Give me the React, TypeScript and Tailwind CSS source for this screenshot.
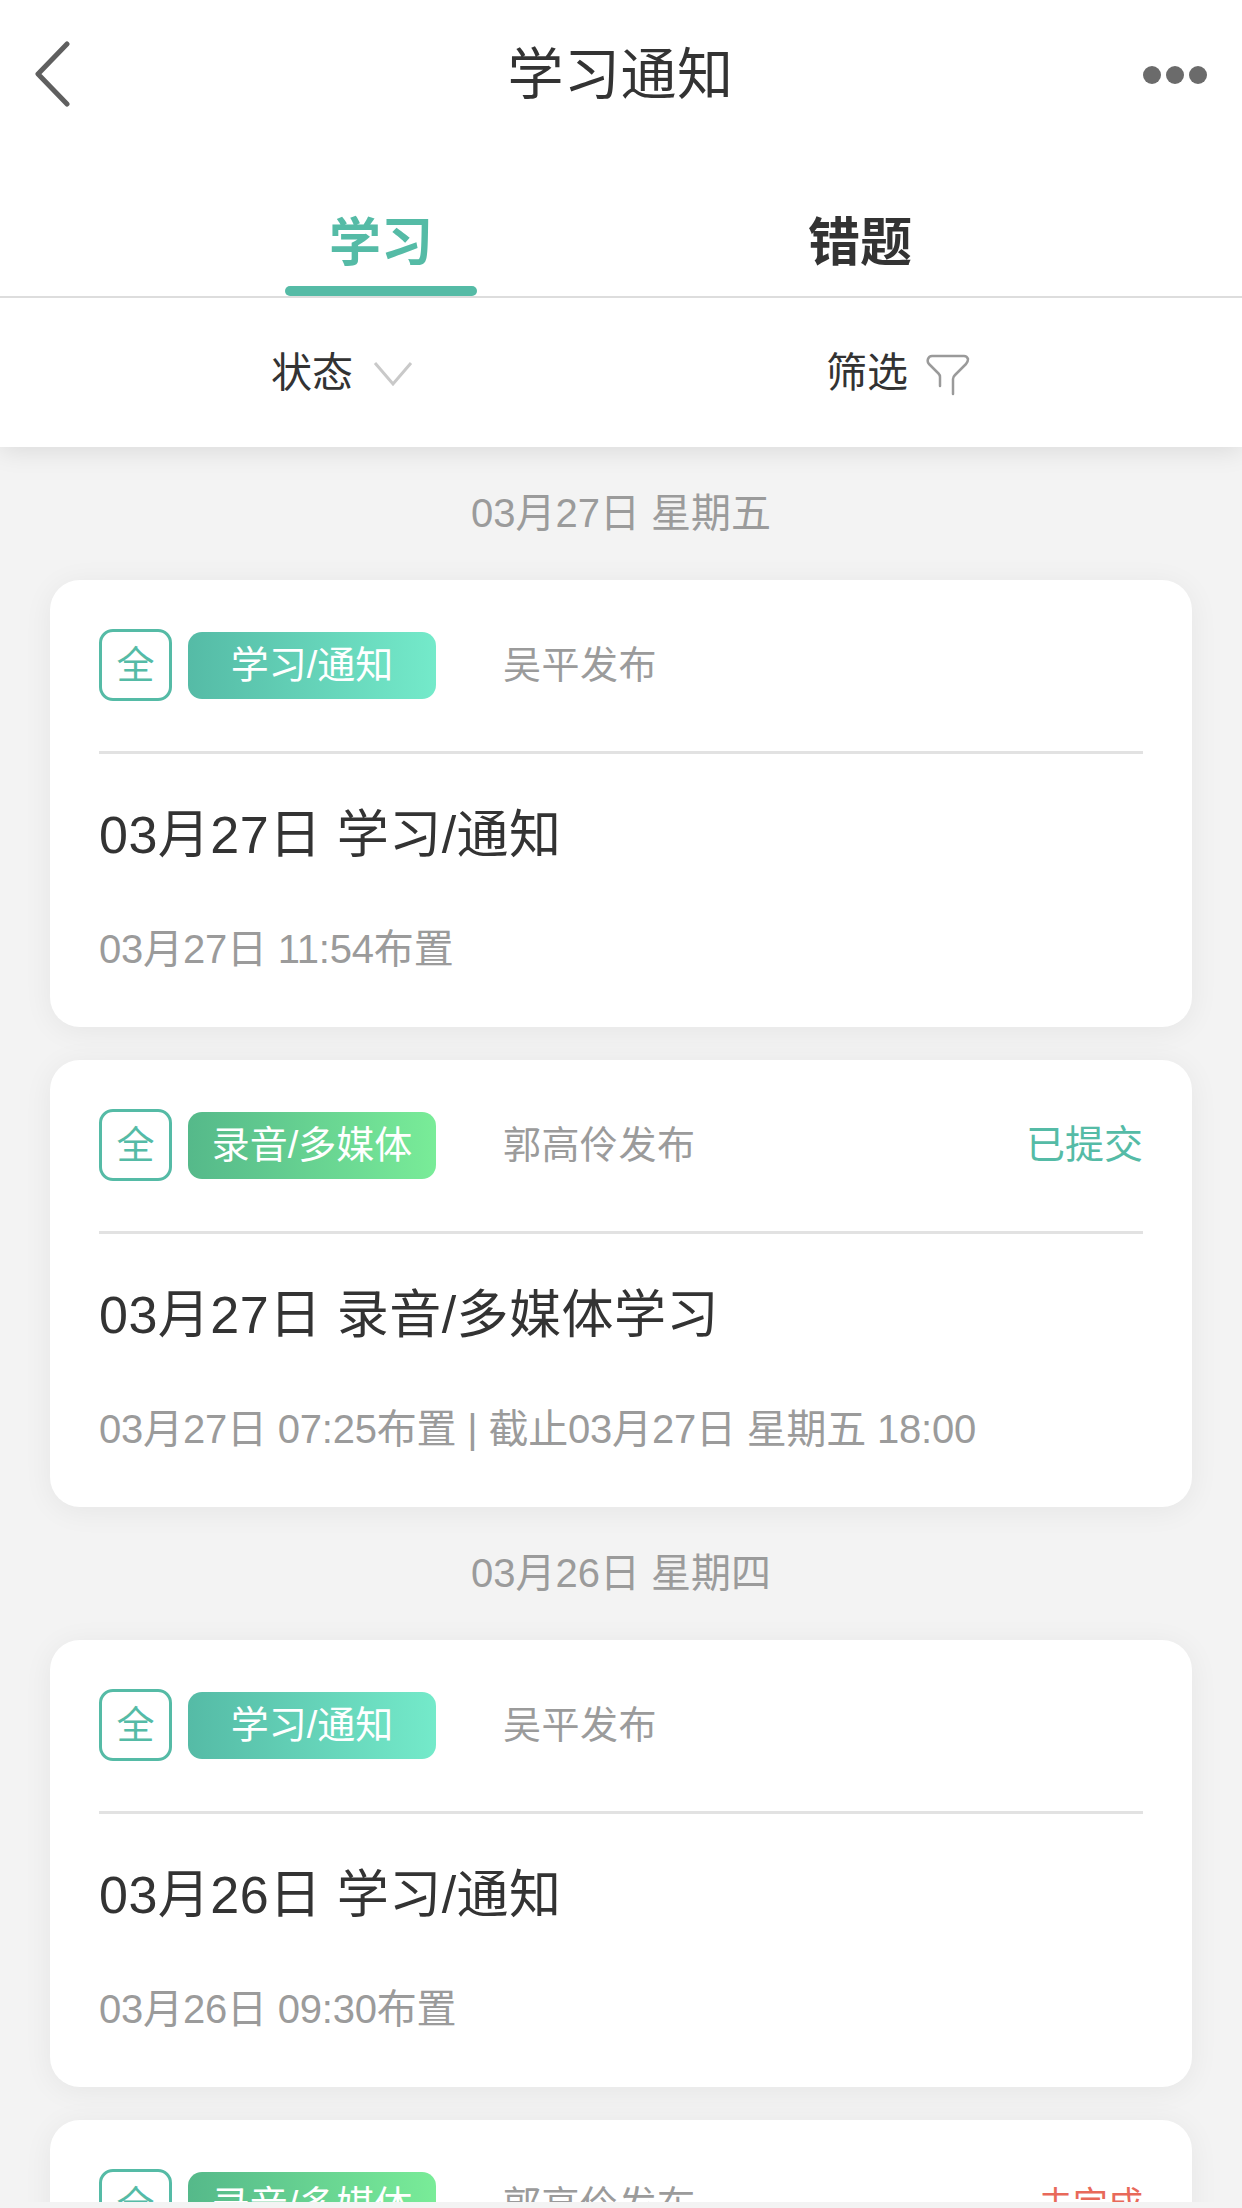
const font = { fontFamily: '"Liberation Sans", "Noto Sans CJK SC", sans-serif' };

function Card({
  tag,
  tagClass,
  author,
  status,
  statusClass,
  title,
  meta,
}: {
  tag: string;
  tagClass: string;
  author: string;
  status?: string;
  statusClass?: string;
  title: string;
  meta: string;
}) {
  return (
    <div className="h-[447px] shrink-0 rounded-[30px] bg-white px-[49px] shadow-[0_4px_30px_rgba(0,0,0,0.06)]">
      <div className="flex h-[174px] items-center border-b-[3px] border-[#e2e2e2] pb-[1px]">
        <div className="flex h-[72px] w-[73px] items-center justify-center rounded-[14px] border-[3px] border-[#55bba6] text-[38px] text-[#55bba6]">
          全
        </div>
        <div
          className={`ml-[16px] flex h-[67px] w-[248px] items-center justify-center rounded-[14px] text-[38px] text-white ${tagClass}`}
        >
          {tag}
        </div>
        <div className="ml-[67px] text-[38px] tracking-[0.5px] text-[#9b9b9b]">{author}</div>
        {status && <div className={`ml-auto ${statusClass}`}>{status}</div>}
      </div>
      <div className="mt-[46px] text-[52px] leading-[70px] tracking-[0.5px] text-[#333333]">{title}</div>
      <div className="mt-[51px] text-[40px] leading-[56px] tracking-[-0.2px] text-[#9b9b9b]">{meta}</div>
    </div>
  );
}

function DateLabel({ children }: { children: string }) {
  return <div className="text-center text-[40px] leading-[50px] text-[#9b9b9b]">{children}</div>;
}

export default function App() {
  return (
    <div style={font} className="h-[2208px] w-[1242px] overflow-hidden bg-[#f3f3f3]">
      <div className="relative z-10 bg-white shadow-[0_4px_24px_rgba(0,0,0,0.1)]">
        <div className="flex h-[148px] items-center px-[34px]">
          <div className="flex-1">
            <svg width="36" height="66" viewBox="0 0 36 66" fill="none">
              <path d="M33 3 L4 33 L33 63" stroke="#5f5f5f" strokeWidth="5" strokeLinecap="round" strokeLinejoin="round" />
            </svg>
          </div>
          <div className="mt-[2px] text-[56px] tracking-[0.5px] text-[#333333]">学习通知</div>
          <div className="mt-[2px] flex flex-1 justify-end gap-[5px] pr-[1px]">
            <span className="h-[18px] w-[18px] rounded-full bg-[#6b6b6b]" />
            <span className="h-[18px] w-[18px] rounded-full bg-[#6b6b6b]" />
            <span className="h-[18px] w-[18px] rounded-full bg-[#6b6b6b]" />
          </div>
        </div>
        <div className="flex h-[150px] items-end border-b-[2px] border-[#dddddd]">
          <div className="ml-[285px] flex w-[192px] flex-col items-center">
            <div className="text-[52px] font-bold leading-[70px] text-[#55bba6]">学习</div>
            <div className="mt-[8px] h-[10px] w-[192px] rounded-[5px] bg-[#55bba6]" />
          </div>
          <div className="ml-[331px] pb-[18px] text-[52px] font-bold leading-[70px] text-[#333333]">错题</div>
        </div>
        <div className="flex h-[149px] items-center pt-[2px] text-[41px] text-[#333333]">
          <div className="ml-[271px] flex items-center">
            <span>状态</span>
            <svg width="40" height="26" viewBox="0 0 40 26" fill="none" className="ml-[20px]">
              <path d="M2 2 L20 23 L38 2" stroke="#c9c9c9" strokeWidth="3" />
            </svg>
          </div>
          <div className="ml-[413px] flex items-center">
            <span>筛选</span>
            <svg width="44" height="42" viewBox="0 0 44 42" fill="none" className="ml-[18px] mt-[2px]">
              <path
                d="M14 32 V23 Q14 21 12.5 19.5 L3 10 Q1 8 2 5 Q3 2 6 2 H38 Q41 2 42 5 Q42 8 40 10 L29 21 Q27 23 27 25 V40"
                stroke="#9a9a9a"
                strokeWidth="2.5"
                strokeLinecap="round"
                strokeLinejoin="round"
              />
            </svg>
          </div>
        </div>
      </div>
      <div className="h-[1755px] overflow-hidden">
        <div className="px-[50px] pt-[41px]">
          <DateLabel>03月27日 星期五</DateLabel>
          <div className="mt-[42px] flex flex-col gap-[33px]">
            <Card
              tag="学习/通知"
              tagClass="bg-gradient-to-r from-[#55bba6] to-[#74eaca]"
              author="吴平发布"
              title="03月27日 学习/通知"
              meta="03月27日 11:54布置"
            />
            <Card
              tag="录音/多媒体"
              tagClass="bg-gradient-to-r from-[#55b98a] to-[#79ec98]"
              author="郭高伶发布"
              status="已提交"
              statusClass="text-[39px] text-[#55bba6]"
              title="03月27日 录音/多媒体学习"
              meta="03月27日 07:25布置 | 截止03月27日 星期五 18:00"
            />
          </div>
          <div className="mt-[41px]">
            <DateLabel>03月26日 星期四</DateLabel>
          </div>
          <div className="mt-[42px] flex flex-col gap-[33px]">
            <Card
              tag="学习/通知"
              tagClass="bg-gradient-to-r from-[#55bba6] to-[#74eaca]"
              author="吴平发布"
              title="03月26日 学习/通知"
              meta="03月26日 09:30布置"
            />
            <Card
              tag="录音/多媒体"
              tagClass="bg-gradient-to-r from-[#55b98a] to-[#79ec98]"
              author="郭高伶发布"
              status="未完成"
              statusClass="text-[35px] text-[#e8695a]"
              title="03月26日 录音/多媒体学习"
              meta="03月26日 07:25布置"
            />
          </div>
        </div>
      </div>
    </div>
  );
}
